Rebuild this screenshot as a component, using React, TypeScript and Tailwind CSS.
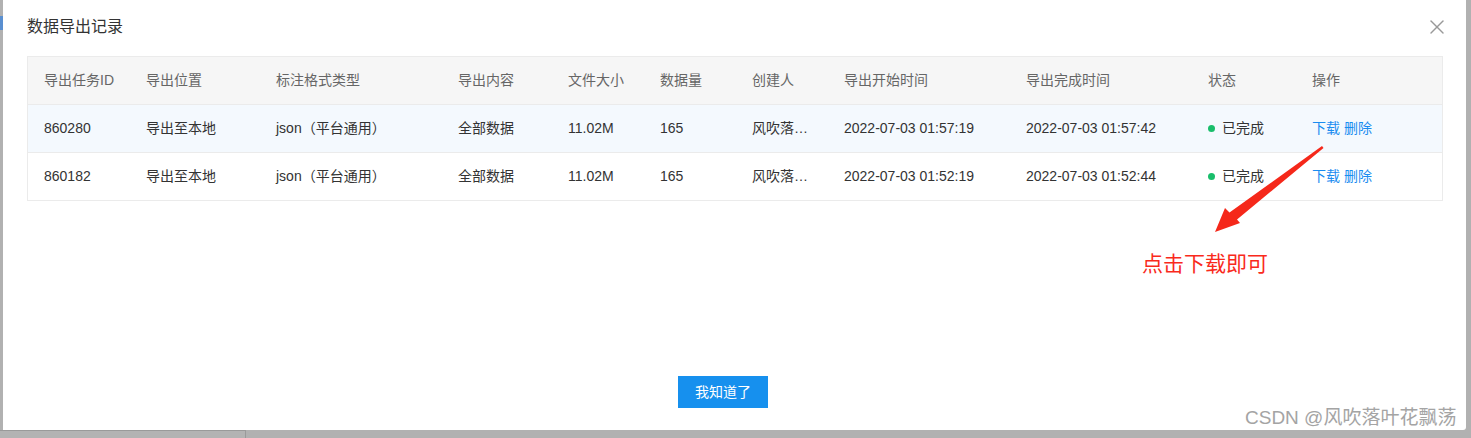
import { X } from "lucide-react";

type Row = {
  id: string;
  place: string;
  format: string;
  content: string;
  size: string;
  count: string;
  creator: string;
  start: string;
  end: string;
  status: string;
};

const rows: Row[] = [
  {
    id: "860280",
    place: "导出至本地",
    format: "json（平台通用）",
    content: "全部数据",
    size: "11.02M",
    count: "165",
    creator: "风吹落…",
    start: "2022-07-03 01:57:19",
    end: "2022-07-03 01:57:42",
    status: "已完成",
  },
  {
    id: "860182",
    place: "导出至本地",
    format: "json（平台通用）",
    content: "全部数据",
    size: "11.02M",
    count: "165",
    creator: "风吹落…",
    start: "2022-07-03 01:52:19",
    end: "2022-07-03 01:52:44",
    status: "已完成",
  },
];

const headers = [
  "导出任务ID",
  "导出位置",
  "标注格式类型",
  "导出内容",
  "文件大小",
  "数据量",
  "创建人",
  "导出开始时间",
  "导出完成时间",
  "状态",
  "操作",
];

const gridCols =
  "grid grid-cols-[102px_130px_182px_110px_92px_92px_92px_182px_182px_104px_1fr]";

export default function App() {
  return (
    <div
      className="relative w-[1471px] h-[438px] overflow-hidden bg-[#b1b1b1]"
      style={{ fontFamily: '"Liberation Sans", "Noto Sans CJK SC", sans-serif' }}
    >
      {/* page behind the mask */}
      <div className="absolute left-0 top-[16px] w-[3px] h-[14px] bg-[#5a8fd0]" />
      <div className="absolute left-0 top-[430px] w-[246px] h-[8px] border-t border-r border-[#9a9a9a] bg-[#b3b3b3]" />

      {/* Dialog */}
      <div className="relative ml-[3px] w-[1463px] h-[430px] bg-white rounded-br-[3px] flex flex-col">
        <div className="h-[56px] pl-[24px] pr-[17px] pb-[2px] flex items-center justify-between">
          <h2 className="text-[16px] text-[#333]">数据导出记录</h2>
          <X className="w-[24px] h-[24px] text-[#999]" strokeWidth={1.4} />
        </div>

        {/* Table */}
        <div className="ml-[24px] mr-[23px] border border-[#ebebeb] text-[14px]">
          <div className={`${gridCols} h-[47px] items-center bg-[#f6f6f6] text-[#666]`}>
            {headers.map((h) => (
              <div key={h} className="pl-[16px] whitespace-nowrap">
                {h}
              </div>
            ))}
          </div>
          {rows.map((r, i) => (
            <div
              key={r.id}
              className={`${gridCols} h-[48px] items-center text-[#333] border-t border-[#ebebeb] ${
                i === 0 ? "bg-[#f4f9fe]" : "bg-white"
              }`}
            >
              <div className="pl-[16px]">{r.id}</div>
              <div className="pl-[16px]">{r.place}</div>
              <div className="pl-[16px]">{r.format}</div>
              <div className="pl-[16px]">{r.content}</div>
              <div className="pl-[16px]">{r.size}</div>
              <div className="pl-[16px]">{r.count}</div>
              <div className="pl-[16px] whitespace-nowrap" title="风吹落叶花飘荡">
                {r.creator}
              </div>
              <div className="pl-[16px]">{r.start}</div>
              <div className="pl-[16px]">{r.end}</div>
              <div className="pl-[16px] flex items-center gap-[7px]">
                <span className="w-[7px] h-[7px] rounded-full bg-[#19be6b]" />
                {r.status}
              </div>
              <div className="pl-[16px] flex gap-[4px] text-[#1a8cf0]">
                <span>下载</span>
                <span>删除</span>
              </div>
            </div>
          ))}
        </div>

        <div className="flex-1" />

        {/* Footer */}
        <div className="flex justify-center pr-[23px] pb-[22px]">
          <button className="w-[90px] h-[32px] bg-[#1690ee] text-white text-[14px]">
            我知道了
          </button>
        </div>
      </div>

      {/* Annotation */}
      <svg
        className="absolute left-0 top-0 pointer-events-none"
        width="1471"
        height="438"
      >
        <polygon
          points="1322,146 1323.5,148 1237,219.5 1240,223 1215,232 1225,208 1229.5,212.5"
          fill="#f5281a"
        />
      </svg>
      <div className="absolute left-[1142px] top-[250px] text-[21px] leading-[28px] text-[#f92a1c]">
        点击下载即可
      </div>

      {/* Watermark */}
      <div
        className="absolute left-[1245px] top-[405px] text-[19px] leading-[26px] text-[#a4a4a4]"
        style={{ textShadow: "0 0 1px #fff" }}
      >
        CSDN @风吹落叶花飘荡
      </div>
    </div>
  );
}
